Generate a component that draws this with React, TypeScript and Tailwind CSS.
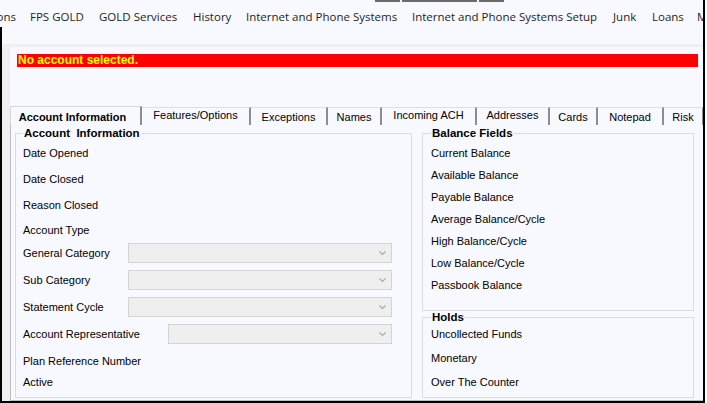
import React from 'react';

const menuItems = [
  { name: 'FPS GOLD', w: 'w-[69px]' },
  { name: 'GOLD Services', w: 'w-[94px]' },
  { name: 'History', w: 'w-[53px]' },
  { name: 'Internet and Phone Systems', w: 'w-[166px]' },
  { name: 'Internet and Phone Systems Setup', w: 'w-[201px]' },
  { name: 'Junk', w: 'w-[39px]' },
  { name: 'Loans', w: 'w-[45px]' },
  { name: 'Maintenance', w: 'w-[90px]' },
];

const tabs = [
  { name: 'Features/Options', w: 'w-[109px]', raised: true },
  { name: 'Exceptions', w: 'w-[77px]', raised: false },
  { name: 'Names', w: 'w-[54px]', raised: false },
  { name: 'Incoming ACH', w: 'w-[95px]', raised: true },
  { name: 'Addresses', w: 'w-[73px]', raised: true },
  { name: 'Cards', w: 'w-[48px]', raised: false },
  { name: 'Notepad', w: 'w-[66px]', raised: false },
  { name: 'Risk', w: 'w-[40px]', raised: false },
];

const balanceFields = [
  'Current Balance',
  'Available Balance',
  'Payable Balance',
  'Average Balance/Cycle',
  'High Balance/Cycle',
  'Low Balance/Cycle',
  'Passbook Balance',
];

const Combo: React.FC<{ width: string }> = ({ width }) => (
  <div className={`${width} h-[20px] bg-[#efefef] border border-[#d4d4d4] flex items-center justify-end pr-[5px]`}>
    <svg width="7" height="5" viewBox="0 0 7 5">
      <polyline points="0.5,0.5 3.5,3.5 6.5,0.5" fill="none" stroke="#a9a9a9" strokeWidth="1.2" />
    </svg>
  </div>
);

const Legend: React.FC<{ children: React.ReactNode }> = ({ children }) => (
  <legend className="px-[1px] text-[11.5px] leading-[13px] font-bold text-black">{children}</legend>
);

const App: React.FC = () => {
  return (
    <div className="w-[707px] h-[403px] overflow-hidden bg-white flex font-['Liberation_Sans',Arial,sans-serif] text-[11px] text-black">
      <div className="w-[703px] h-full flex flex-col bg-[#f8f9fe]">
        {/* Menu strip */}
        <div className="h-[27px] flex flex-col">
          <div className="h-[2px] flex">
            <div className="w-[375px]" />
            <div className="w-[25px] bg-[#6b6b6b]" />
            <div className="w-[2px]" />
            <div className="w-[75px] bg-[#6b6b6b]" />
            <div className="w-[2px]" />
            <div className="w-[25px] bg-[#6b6b6b]" />
          </div>
          <div className="flex-1 flex items-center pt-[4px] font-['Open_Sans','Noto_Sans',sans-serif] text-[11.5px] text-[#1e1e1e] whitespace-nowrap overflow-hidden">
            <div className="w-[30px] shrink-0 flex justify-end pr-[14px] overflow-hidden">
              <span>Options</span>
            </div>
            {menuItems.map(item => (
              <div key={item.name} className={`${item.w} shrink-0`}>
                {item.name}
              </div>
            ))}
          </div>
        </div>

        <div className="flex-1 flex flex-col border-l-2 border-b-2 border-black">
          <div className="h-[17px]" />
          <div className="h-[3px] bg-[#f0f0f0]" />
          <div className="flex-1 flex bg-[#f0f0f0]">
            <div className="w-[8px] shrink-0" />
            <div className="flex-1 flex flex-col bg-[#f8f9fe] min-w-0">
              {/* Status bar */}
              <div className="mt-[7px] ml-[7px] mr-[5px] h-[13px] bg-[#ff0000] text-[#ffff00] font-bold text-[12px] leading-[13px] pl-[1px]">
                No account selected.
              </div>

              {/* Tabs */}
              <div className="mt-[39px] h-[19px] flex whitespace-nowrap overflow-hidden">
                <div className="w-[132px] shrink-0 h-[19px] border-l border-t border-[#d6d6d6] border-r-2 border-r-[#8d8d8d] rounded-tl-[2px] flex items-center justify-center pr-[6px] pt-[2px] font-bold">
                  Account Information
                </div>
                {tabs.map(tab => (
                  <div
                    key={tab.name}
                    className={`${tab.w} shrink-0 h-[18px] mt-[1px] border-t border-[#dedede] border-r-2 border-r-[#8d8d8d] flex items-center justify-center ${
                      tab.raised ? 'pb-[3px]' : 'pt-[1px]'
                    }`}
                  >
                    {tab.name}
                  </div>
                ))}
              </div>

              {/* Tab page */}
              <div className="flex-1 border-l border-b border-[#bdbdbd] pt-[2px] flex">
                <fieldset className="ml-[4px] w-[397px] h-[271px] border border-[#dcdcdc] px-[7px] flex flex-col">
                  <Legend>Account&nbsp; Information</Legend>
                  <div className="h-[26px] flex items-center">Date Opened</div>
                  <div className="h-[26px] flex items-center">Date Closed</div>
                  <div className="h-[26px] flex items-center">Reason Closed</div>
                  <div className="h-[25px] flex items-center">Account Type</div>
                  <div className="h-[20px] flex items-center">
                    <span className="w-[105px]">General Category</span>
                    <Combo width="w-[264px]" />
                  </div>
                  <div className="mt-[7px] h-[20px] flex items-center">
                    <span className="w-[105px]">Sub Category</span>
                    <Combo width="w-[264px]" />
                  </div>
                  <div className="mt-[7px] h-[20px] flex items-center">
                    <span className="w-[105px]">Statement Cycle</span>
                    <Combo width="w-[264px]" />
                  </div>
                  <div className="mt-[7px] h-[20px] flex items-center">
                    <span className="w-[145px]">Account Representative</span>
                    <Combo width="w-[224px]" />
                  </div>
                  <div className="mt-[7px] h-[20px] flex items-center">Plan Reference Number</div>
                  <div className="mt-[1px] h-[20px] flex items-center">Active</div>
                </fieldset>

                <div className="ml-[10px] w-[272px] flex flex-col">
                  <fieldset className="h-[184px] border border-[#dcdcdc] px-[8px] flex flex-col">
                    <Legend>Balance Fields</Legend>
                    <div className="mt-[2px]" />
                    {balanceFields.map(label => (
                      <div key={label} className="h-[22px] flex items-center">
                        {label}
                      </div>
                    ))}
                  </fieldset>
                  <fieldset className="h-[87px] border border-[#dcdcdc] px-[8px] flex flex-col">
                    <Legend>Holds</Legend>
                    <div className="h-[20px] flex items-center">Uncollected Funds</div>
                    <div className="mt-[4px] h-[20px] flex items-center">Monetary</div>
                    <div className="mt-[4px] h-[20px] flex items-center">Over The Counter</div>
                  </fieldset>
                </div>
              </div>
            </div>
          </div>
        </div>
      </div>
      <div className="w-[2px] h-full bg-black" />
    </div>
  );
};

export default App;
